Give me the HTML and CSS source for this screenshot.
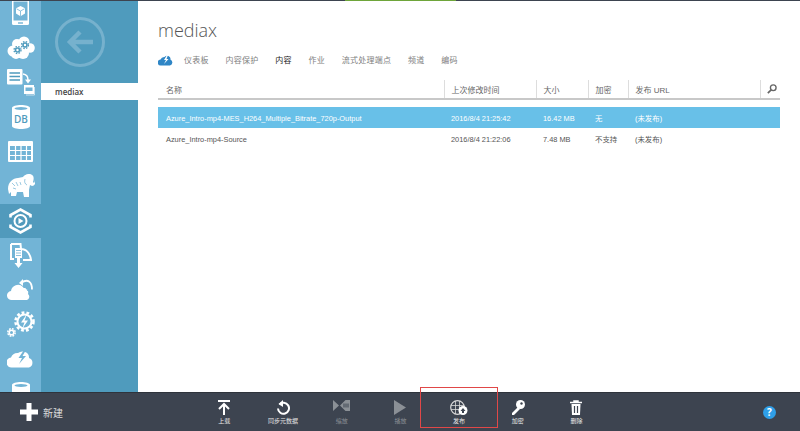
FILE: index.html
```html
<!DOCTYPE html>
<html lang="zh-CN">
<head>
    <meta charset="UTF-8">
    <meta name="viewport" content="width=device-width, initial-scale=1.0">
    <title>mediax</title>
    <link rel="stylesheet" href="styles.css">
</head>
<body>
    <div class="topbar"><div class="topbar-green"></div></div>

    <div class="main">
        <!-- service icons -->
        <div class="rail">
            <div class="rail-item">
                <svg width="18" height="26" viewBox="0 0 18 26"><rect x="0" y="0" width="17" height="25" rx="1.500" fill="#fff"/><rect x="1.500" y="1.500" width="14" height="19" fill="#72b4d6"/><path d="M8.500 6l4.500 2.300v5.200l-4.500 2.800-4.500-2.800V8.300z" fill="#fff"/><path d="M4.500 8.800l4 2.200 4-2.200M8.500 11v5" fill="none" stroke="#72b4d6" stroke-width=".8"/><rect x="6" y="22.300" width="5" height="1.400" fill="#72b4d6"/></svg>
            </div>
            <div class="rail-item">
                <svg width="28" height="24" viewBox="0 0 28 24"><g fill="#fff"><circle cx="6" cy="15" r="5.500"/><circle cx="10" cy="8" r="5"/><circle cx="17" cy="6" r="5.500"/><circle cx="23" cy="12" r="4.800"/><circle cx="16" cy="17" r="6"/><circle cx="9" cy="18" r="5"/></g><g fill="none" stroke="#4f9bbd"><circle cx="10.500" cy="14" r="2" stroke-width="1.600"/><circle cx="10.500" cy="14" r="3.500" stroke-width="1.300" stroke-dasharray="1.500 1.300"/><circle cx="18" cy="9" r="2" stroke-width="1.600"/><circle cx="18" cy="9" r="3.500" stroke-width="1.300" stroke-dasharray="1.500 1.300"/></g></svg>
            </div>
            <div class="rail-item">
                <svg width="28" height="27" viewBox="0 0 28 27"><rect x="0" y="0" width="15.500" height="15.500" rx="1" fill="#fff"/><path d="M2.500 4h10.500M2.500 7.500h10.500M2.500 11h10.500" stroke="#4f9bbd" stroke-width="1.500"/><path d="M16 5q5 .5 5 6" fill="none" stroke="#fff" stroke-width="1.500"/><path d="M18 10.500h6l-3 4z" fill="#fff"/><rect x="17" y="16" width="10" height="9" fill="#fff"/><rect x="18.500" y="18.500" width="7" height="3.500" fill="#72b4d6"/><path d="M19 26h8.500v-8" fill="none" stroke="#c9e1ee"/></svg>
            </div>
            <div class="rail-item">
                <svg width="18" height="24" viewBox="0 0 18 24"><path d="M0 3c0-4 18-4 18 0v18c0 4-18 4-18 0z" fill="#fff"/><ellipse cx="9" cy="3.500" rx="6.500" ry="1.500" fill="#72b4d6"/><text x="9" y="18" class="db-label">DB</text></svg>
            </div>
            <div class="rail-item">
                <svg width="25" height="21" viewBox="0 0 25 21"><rect width="25" height="21" rx="1" fill="#fff"/><path d="M2 5h21v14H2z" fill="#72b4d6"/><path d="M2 9.500h21M2 14.500h21M7.500 5v14M13 5v14M18.500 5v14" stroke="#fff" stroke-width="1.200"/></svg>
            </div>
            <div class="rail-item">
                <svg width="28" height="24" viewBox="0 0 28 24"><path d="M1 15C1 8 6 4 11 4l5-1c2-3 7-4 9-2 2 1 2 4 1 7l1 1c1-1 1-3 1-5h1c.5 4-1 8-4 8l-2-1-1 5v7h-5l-1-5h-6l-1 4H4v-4l-2 2z" fill="#fff"/><path d="M18 5c-1 3 0 5 2 6M5 9l3 3M9 8l2 4M6 14l3 1M13 8l1 3" fill="none" stroke="#72b4d6" stroke-width=".7"/></svg>
            </div>
            <div class="rail-item rail-active">
                <svg width="23" height="26" viewBox="0 0 23 26"><path d="M1.500 9.500V7L11.500 1.500 21.500 7V9.500M1.500 16.500V19l10 5.500 10-5.500V16.500" fill="none" stroke="#fff" stroke-width="2.600"/><circle cx="11.500" cy="13" r="6" fill="none" stroke="#fff" stroke-width="2"/><path d="M9.500 10l5 3-5 3z" fill="#fff"/></svg>
            </div>
            <div class="rail-item">
                <svg width="23" height="25" viewBox="0 0 23 25"><path d="M2 1h9.500l.5 5c5 0 9 4 10 11H14M2 1v15h3" fill="none" stroke="#fff" stroke-width="2"/><path d="M6 5h7v10H6z" fill="#fff"/><path d="M7 7.500h5M7 10h5M7 12.500h5" stroke="#72b4d6" stroke-width=".8"/><path d="M8 15h3v5h2.500l-4 5-4-5H8z" fill="#fff"/></svg>
            </div>
            <div class="rail-item">
                <svg width="27" height="22" viewBox="0 0 27 22"><path d="M5 21a4.500 4.500 0 0 1-1-9 7 7 0 0 1 12-4 5.500 5.500 0 0 1 5 7 3.500 3.500 0 0 1-1 6z" fill="#fff"/><path d="M14 4q5-3.500 8-1.500 3 2 3 8" fill="none" stroke="#fff" stroke-width="1.800"/><path d="M16 0v7l-4-3z" fill="#fff"/><path d="M16 8q4 0 5 4" fill="none" stroke="#72b4d6"/></svg>
            </div>
            <div class="rail-item">
                <svg width="28" height="27" viewBox="0 0 28 27"><circle cx="17.500" cy="10.500" r="7" fill="none" stroke="#fff" stroke-width="2"/><circle cx="17.500" cy="10.500" r="9" fill="none" stroke="#fff" stroke-width="2.600" stroke-dasharray="2.800 2.100"/><path d="M20 3l-6 8.500h3.500L15 18l6-8.500h-3.500z" fill="#fff"/><circle cx="4.500" cy="21.500" r="2.300" fill="none" stroke="#fff" stroke-width="1.600"/><circle cx="4.500" cy="21.500" r="3.700" fill="none" stroke="#fff" stroke-width="1.500" stroke-dasharray="1.800 1.100"/></svg>
            </div>
            <div class="rail-item">
                <svg width="27" height="18" viewBox="0 0 27 18"><path d="M5 17.500a5 5 0 0 1-1-10 7 7 0 0 1 7-4.500 7 7 0 0 1 7-1 6 6 0 0 1 4 6 5 5 0 0 1 0 9.500z" fill="#fff"/><path d="M17 0l-5.500 8H15l-3 6 7-8h-3.500L19 0z" fill="#72b4d6"/></svg>
            </div>
            <div class="rail-item">
                <svg width="18" height="24" viewBox="0 0 18 24"><path d="M0 3c0-4 18-4 18 0v18c0 4-18 4-18 0z" fill="#fff"/><ellipse cx="9" cy="3.500" rx="6.500" ry="1.500" fill="#72b4d6"/></svg>
            </div>
        </div>

        <!-- item list -->
        <div class="side">
            <div class="back">
                <svg width="52" height="52" viewBox="0 0 52 52"><circle cx="26" cy="26" r="23.500" fill="none" stroke="#76b1cd" stroke-width="3"/><path d="M39 26H17M26 16l-10 10 10 10" fill="none" stroke="#76b1cd" stroke-width="4.500"/></svg>
            </div>
            <div class="side-item">mediax</div>
        </div>

        <!-- content -->
        <div class="content">
            <h1>mediax</h1>
            <div class="tabs">
                <svg class="tab-icon" width="15" height="11" viewBox="0 0 15 11"><path d="M3 10.500a3 3 0 0 1-.5-6 4 4 0 0 1 4-2.500 4 4 0 0 1 4-1 3.500 3.500 0 0 1 2 3.800 3 3 0 0 1-.5 5.700z" fill="#2f86c6"/><path d="M9 0L6 5h2L6 9l4.500-5H8.500L10 0z" fill="#fff"/></svg>
                <span class="tab">仪表板</span>
                <span class="tab">内容保护</span>
                <span class="tab tab-on">内容</span>
                <span class="tab">作业</span>
                <span class="tab">流式处理端点</span>
                <span class="tab">频道</span>
                <span class="tab">编码</span>
            </div>

            <table class="assets">
                <colgroup>
                    <col class="col-name"><col class="col-time"><col class="col-size"><col class="col-enc"><col class="col-url"><col class="col-find">
                </colgroup>
                <thead>
                    <tr>
                        <th>名称</th>
                        <th>上次修改时间</th>
                        <th>大小</th>
                        <th>加密</th>
                        <th>发布 URL</th>
                        <th class="find"><svg width="10" height="10" viewBox="0 0 12 12"><circle cx="7.500" cy="4.500" r="3.400" fill="none" stroke="#666" stroke-width="1.600"/><path d="M5 7l-4 4" stroke="#666" stroke-width="2"/></svg></th>
                    </tr>
                </thead>
                <tbody>
                    <tr class="selected">
                        <td>Azure_Intro-mp4-MES_H264_Multiple_Bitrate_720p-Output</td>
                        <td>2016/8/4 21:25:42</td>
                        <td>16.42 MB</td>
                        <td class="cjk">无</td>
                        <td class="cjk">(未发布)</td>
                        <td></td>
                    </tr>
                    <tr>
                        <td>Azure_Intro-mp4-Source</td>
                        <td>2016/8/4 21:22:06</td>
                        <td>7.48 MB</td>
                        <td class="cjk">不支持</td>
                        <td class="cjk">(未发布)</td>
                        <td></td>
                    </tr>
                </tbody>
            </table>
        </div>
    </div>

    <!-- command bar -->
    <div class="bar">
        <div class="new">
            <svg width="18" height="18" viewBox="0 0 18 18"><path d="M6.500 0h5v6.500H18v5h-6.500V18h-5v-6.500H0v-5h6.500z" fill="#fff"/></svg>
            <span>新建</span>
        </div>
        <div class="actions">
            <div class="action">
                <svg width="14" height="15" viewBox="0 0 14 15"><path d="M1 1h12M7 15V5M2 9l5-5 5 5" fill="none" stroke="#fff" stroke-width="2"/></svg>
                <span>上载</span>
            </div>
            <div class="action">
                <svg width="14" height="15" viewBox="0 0 14 15"><path d="M3.500 4.500a5.500 5.500 0 1 1-1.500 4" fill="none" stroke="#fff" stroke-width="2"/><path d="M7 0v7L2.500 4z" fill="#fff"/></svg>
                <span>同步元数据</span>
            </div>
            <div class="action action-off">
                <svg width="17" height="11" viewBox="0 0 17 11"><path d="M0 0l6 5.500L0 11zM17 0v11h-4.500L7 5.500 12.500 0z" fill="#8b9096"/><path d="M11 3.500v4M13 3.500v4M15 3.500v4" stroke="#3d4450"/></svg>
                <span>缩放</span>
            </div>
            <div class="action action-off">
                <svg width="12" height="15" viewBox="0 0 12 15"><path d="M0 0l12 7.500L0 15z" fill="#8b9096"/></svg>
                <span>播放</span>
            </div>
            <div class="action">
                <svg width="18" height="16" viewBox="0 0 18 16"><circle cx="7.500" cy="7.500" r="6.800" fill="none" stroke="#d8d8d8" stroke-width="1.200"/><path d="M1 5.500h13M1 9.500h13M5.500 1v13M9.500 1v13" stroke="#d8d8d8" stroke-width=".8"/><circle cx="13" cy="10.500" r="4.500" fill="#fff"/><path d="M13 8l-2.500 3H12v2h2v-2h1.500z" fill="#3d4450"/></svg>
                <span>发布</span>
            </div>
            <div class="action">
                <svg width="14" height="15" viewBox="0 0 14 15"><circle cx="9.500" cy="4.500" r="4.500" fill="#fff"/><circle cx="10.500" cy="3.500" r="1.200" fill="#3d4450"/><path d="M7 7L1 13v2h2l6-6z" fill="#fff"/></svg>
                <span>加密</span>
            </div>
            <div class="action">
                <svg width="12" height="15" viewBox="0 0 12 15"><path d="M0 2.500h12M4 2.500V1h4v1.500" fill="none" stroke="#fff" stroke-width="1.500"/><path d="M1.500 4h9l-.5 11H2z" fill="#fff"/><path d="M4.500 6v7M7.500 6v7" stroke="#3d4450" stroke-width="1.200"/></svg>
                <span>删除</span>
            </div>
        </div>
        <div class="help">?</div>
    </div>

    <!-- red mark over the publish button -->
    <div class="mark"></div>
</body>
</html>
```

FILE: styles.css
```css
html, body {
    height: 100%;
}
body {
    margin: 0;
    display: flex;
    flex-direction: column;
    overflow: hidden;
    position: relative;
    font-family: "Open Sans", "Noto Sans CJK SC", sans-serif;
    background-color: #fff;
}
.topbar {
    height: 1px;
    flex: none;
    background-color: #3d4450;
}
.topbar-green {
    width: 111px;
    height: 1px;
    margin-left: 345px;
    background-color: #6ea53a;
}
.main {
    flex: 1;
    display: flex;
    min-height: 0;
}

/* left icon rail */
.rail {
    width: 41px;
    flex: none;
    overflow: hidden;
    background-color: #72b4d6;
}
.rail-item {
    height: 34.6px;
    display: flex;
    align-items: center;
    justify-content: center;
}
.rail-item:first-child {
    margin-top: -5px;
}
.rail-active {
    background-color: #519abc;
}
.db-label {
    font-family: "Open Sans", sans-serif;
    font-size: 10px;
    font-weight: 600;
    fill: #4f9bbd;
    text-anchor: middle;
}

/* item list */
.side {
    width: 97px;
    flex: none;
    background-color: #4f9bbd;
}
.back {
    height: 82px;
    padding-left: 13px;
    padding-top: 15px;
    box-sizing: border-box;
}
.side-item {
    height: 17px;
    line-height: 17px;
    padding-left: 14px;
    font-size: 8px;
    font-weight: 600;
    color: #444;
    background-color: #fff;
}

/* content */
.content {
    flex: 1;
    padding: 0 20px;
    min-width: 0;
}
h1 {
    margin: 15px 0 0;
    font-size: 18px;
    line-height: 28px;
    font-weight: 300;
    color: #555;
}
.tabs {
    display: flex;
    align-items: center;
    height: 14px;
    margin-top: 8px;
    font-size: 8px;
    color: #808080;
}
.tab-icon {
    flex: none;
    margin-right: 11px;
    margin-top: 2px;
}
.tab {
    margin-right: 16.75px;
    white-space: nowrap;
    letter-spacing: 0.25px;
}
.tab-on {
    color: #222;
}
.assets {
    width: 622px;
    margin-top: 14px;
    border-collapse: collapse;
    table-layout: fixed;
    font-family: "Liberation Sans", "Noto Sans CJK SC", sans-serif;
    font-size: 8px;
    color: #555;
}
.col-name { width: 286px; }
.col-time { width: 92px; }
.col-size { width: 52px; }
.col-enc { width: 40px; }
.col-url { width: 132px; }
.col-find { width: 20px; }
.assets th {
    height: 18px;
    padding: 0 0 0 7px;
    text-align: left;
    font-weight: 400;
    color: #666;
    border-left: 1px solid #ddd;
    border-bottom: 2px solid #c8c8c8;
}
.assets th:first-child {
    padding-left: 8px;
    border-left: none;
}
.assets th.find {
    padding-left: 6px;
}
.assets th.find svg {
    display: block;
}
.assets td {
    height: 19px;
    padding: 2px 0 0 7px;
    font-size: 7.4px;
    white-space: nowrap;
    overflow: hidden;
}
.assets td:first-child {
    padding-left: 8px;
}
.assets td.cjk {
    padding-top: 0;
    height: 21px;
}
.assets thead::after {
    content: "";
    display: block;
    height: 7px;
}
.selected td {
    color: #fff;
    background-color: #68c0e8;
}

/* command bar */
.bar {
    height: 39px;
    flex: none;
    display: flex;
    align-items: center;
    background-color: #3d4450;
    border-top: 1px solid #2f343c;
    box-sizing: border-box;
}
.new {
    display: flex;
    align-items: center;
    gap: 5px;
    margin-left: 20px;
    width: 175px;
    flex: none;
    font-size: 10px;
    color: #ddd;
}
.actions {
    display: flex;
    align-self: flex-start;
}
.action {
    width: 58.7px;
    height: 32px;
    display: flex;
    flex-direction: column;
    align-items: center;
    justify-content: space-between;
    padding-top: 7px;
    box-sizing: border-box;
    font-size: 6px;
    line-height: 8px;
    color: #e8e8e8;
}
.action svg {
    flex: none;
}
.action-off {
    color: #8b9096;
}
.help {
    width: 13px;
    height: 13px;
    margin-left: 157px;
    border-radius: 50%;
    text-align: center;
    font-size: 10px;
    line-height: 13px;
    font-weight: 700;
    color: #fff;
    background-color: #2f9fe8;
}

/* annotation over the bar */
.mark {
    position: absolute;
    left: 420px;
    top: 387px;
    width: 76px;
    height: 39px;
    border: 1px solid #e04848;
}
```
